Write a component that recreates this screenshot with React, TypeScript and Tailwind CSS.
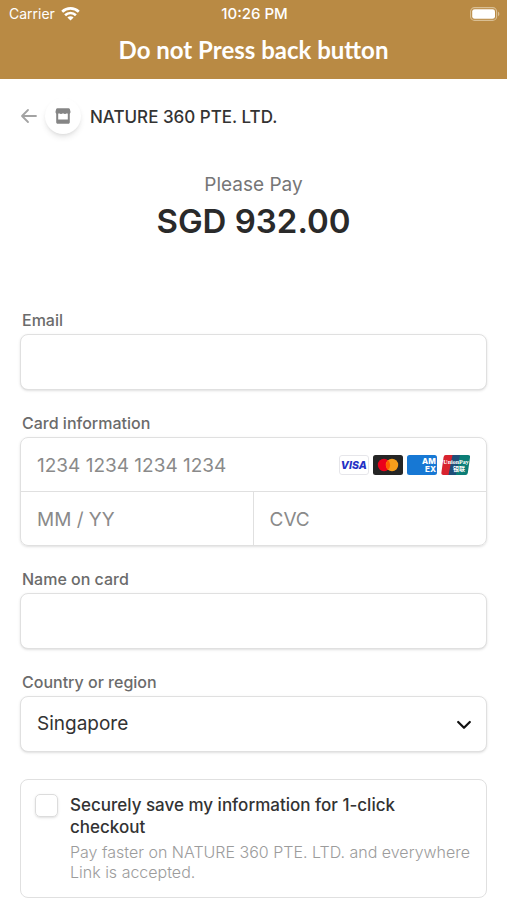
import React, { useState } from "react";
import clsx from "clsx";

const fieldClass =
  "w-full h-14 rounded-lg border border-[#e0e0e0] bg-white px-4 text-[19px] text-[#333] shadow-sm outline-none";
const cardInputClass =
  "min-w-0 pt-0.5 text-[19px] leading-6 outline-none placeholder:text-[#8a8a8a]";
const labelClass = "block mb-1 pl-0.5 text-base leading-5 font-medium text-[#6b6b6b]";

function StatusBar() {
  return (
    <div className="grid grid-cols-3 items-center h-7 pl-[9px] pr-[7px] text-sm">
      <div className="flex items-center gap-[6px]">
        <span>Carrier</span>
        <svg width="19" height="14" viewBox="0 0 19 14" fill="none">
          <path d="M1.2 4.8a12 12 0 0 1 16.6 0" stroke="#fff" strokeWidth="2.7" />
          <path d="M4.1 8.2a7.8 7.8 0 0 1 10.8 0" stroke="#fff" strokeWidth="2.6" />
          <path d="M9.5 13.6 6.4 10.6a4.4 4.4 0 0 1 6.2 0Z" fill="#fff" />
        </svg>
      </div>
      <span className="text-center text-[15px] font-medium">10:26 PM</span>
      <svg className="ml-auto" width="30" height="14" viewBox="0 0 30 14" fill="none">
        <rect x="0.6" y="0.6" width="26" height="12.8" rx="4" stroke="#d9bf94" strokeWidth="1.1" />
        <rect x="2.2" y="2.2" width="22.8" height="9.6" rx="2.4" fill="#fff" />
        <path d="M28 4.8c1.8.6 1.8 3.8 0 4.4Z" fill="#d9bf94" />
      </svg>
    </div>
  );
}

function CardBrands() {
  return (
    <div className="flex items-center gap-1 shrink-0">
      <svg width="30" height="20" viewBox="0 0 30 20" role="img" aria-label="Visa">
        <rect x="0.5" y="0.5" width="29" height="19" rx="2.5" fill="#fff" stroke="#e6e6ea" />
        <text
          x="14.8"
          y="13.8"
          textAnchor="middle"
          fontFamily="Inter, sans-serif"
          fontSize="10.5"
          fontWeight="800"
          fontStyle="italic"
          fill="#2430c4"
        >
          VISA
        </text>
      </svg>
      <svg width="30" height="20" viewBox="0 0 30 20" role="img" aria-label="Mastercard">
        <rect width="30" height="20" rx="2.5" fill="#252525" />
        <circle cx="11" cy="10" r="6.2" fill="#eb001b" />
        <circle cx="19" cy="10" r="6.2" fill="#f79e1b" />
        <path d="M15 5.3a6.2 6.2 0 0 1 0 9.4 6.2 6.2 0 0 1 0-9.4Z" fill="#ff5f00" />
      </svg>
      <svg width="30" height="20" viewBox="0 0 30 20" role="img" aria-label="American Express">
        <rect width="30" height="20" rx="2.5" fill="#1778d4" />
        <g fontFamily="Inter, sans-serif" fontSize="8" fontWeight="800" fill="#fff">
          <text x="15" y="9">AM</text>
          <text x="18" y="17">EX</text>
        </g>
      </svg>
      <svg width="30" height="20" viewBox="0 0 30 20" role="img" aria-label="UnionPay">
        <path d="M4.6 0H14L10 20H2.4Q0 20 .4 17.6L2.6 2Q3 0 4.6 0Z" fill="#d8232f" />
        <path d="M11.5 0H20.5L16.5 20H7.5Z" fill="#1f4e79" />
        <path d="M19 0H27Q29.4 0 29 2.4L26.8 18Q26.4 20 24.6 20H14.8Z" fill="#0b7d76" />
        <g fill="#fff" fontWeight="700" textAnchor="middle">
          <text x="15" y="9" fontFamily="Liberation Serif, serif" fontSize="6">
            UnionPay
          </text>
          <text x="18" y="16.4" fontFamily="Noto Sans CJK SC, sans-serif" fontSize="6">
            银联
          </text>
        </g>
      </svg>
    </div>
  );
}

export default function App() {
  const [saveInfo, setSaveInfo] = useState(false);

  return (
    <div className="min-h-screen bg-white font-['Inter',sans-serif]">
      <header className="h-[79px] bg-[#b98a44] text-white">
        <StatusBar />
        <h1 className="mt-2 text-center text-2xl leading-7 font-bold font-['Lato',sans-serif]">
          Do not Press back button
        </h1>
      </header>

      <main className="px-5 pb-1">
        <div className="flex items-center pt-[19px]">
          <button aria-label="Back">
            <svg width="17" height="16" viewBox="0 0 17 16" fill="none">
              <path
                d="M16 8H2.5M8 2 2 8l6 6"
                stroke="#a3a3a3"
                strokeWidth="1.8"
                strokeLinecap="round"
                strokeLinejoin="round"
              />
            </svg>
          </button>
          <div className="ml-2 w-9 h-9 flex items-center justify-center rounded-full bg-white shadow-md">
            <svg width="16" height="16" viewBox="0 0 16 16" fill="#858585">
              <path d="M2.4.3h11.2c.6 0 1 .3 1.2.8l.7 2.7c0 1.3-.7 2.2-1.6 2.2-.8 0-1.4-.3-1.9-.8-.5.5-1.2.8-2 .8s-1.5-.3-2-.8c-.5.5-1.2.8-2 .8s-1.5-.3-2-.8c-.5.5-1.1.8-1.9.8C1.2 6 .5 5.1.5 3.8l.7-2.7c.2-.5.6-.8 1.2-.8Z" />
              <path d="M1.2 5h2v6.4h9.6V5h2v9.2c0 .9-.6 1.5-1.5 1.5H2.7c-.9 0-1.5-.6-1.5-1.5Z" />
            </svg>
          </div>
          <span className="ml-[9px] pt-0.5 text-[17px] leading-6 font-medium text-[#333]">
            NATURE 360 PTE. LTD.
          </span>
        </div>

        <div className="mt-[39px] text-center">
          <p className="text-[19px] leading-6 text-[#767676]">Please Pay</p>
          <p className="text-[33px] leading-[48px] font-semibold text-[#2a2a2a]">
            SGD 932.00
          </p>
        </div>

        <form className="mt-[65px]">
          <div>
            <label htmlFor="email" className={labelClass}>
              Email
            </label>
            <input id="email" type="email" className={fieldClass} />
          </div>

          <fieldset className="mt-[23px]">
            <legend className={labelClass}>Card information</legend>
            <div className="rounded-lg border border-[#e0e0e0] shadow-sm">
              <div className="flex items-center h-[54px] pl-4 pr-[15px] border-b border-[#e0e0e0]">
                <input
                  aria-label="Card number"
                  placeholder="1234 1234 1234 1234"
                  className={clsx(cardInputClass, "flex-1")}
                />
                <CardBrands />
              </div>
              <div className="grid grid-cols-2 h-[53px]">
                <input
                  aria-label="Expiry date"
                  placeholder="MM / YY"
                  className={clsx(cardInputClass, "px-4 border-r border-[#e0e0e0]")}
                />
                <input
                  aria-label="CVC"
                  placeholder="CVC"
                  className={clsx(cardInputClass, "px-4")}
                />
              </div>
            </div>
          </fieldset>

          <div className="mt-[23px]">
            <label htmlFor="name" className={labelClass}>
              Name on card
            </label>
            <input id="name" type="text" className={fieldClass} />
          </div>

          <div className="mt-[23px]">
            <label htmlFor="country" className={labelClass}>
              Country or region
            </label>
            <div className="relative">
              <select id="country" className={clsx(fieldClass, "block appearance-none")}>
                <option>Singapore</option>
              </select>
              <svg
                className="absolute right-4 top-6 pointer-events-none"
                width="14"
                height="10"
                viewBox="0 0 14 10"
                fill="none"
              >
                <path
                  d="M1.2 2 7 7.8 12.8 2"
                  stroke="#111"
                  strokeWidth="2.2"
                  strokeLinecap="round"
                  strokeLinejoin="round"
                />
              </svg>
            </div>
          </div>

          <div className="mt-[27px] flex gap-3 rounded-lg border border-[#e0e0e0] pl-[14px] pr-1 pt-[14px] pb-[15px]">
            <input
              id="save"
              type="checkbox"
              checked={saveInfo}
              onChange={() => setSaveInfo(!saveInfo)}
              className="shrink-0 w-[23px] h-[23px] appearance-none rounded-[5px] border border-[#dcdcdc] shadow-sm checked:bg-[#333]"
            />
            <div>
              <label
                htmlFor="save"
                className="block pr-8 text-[17px] leading-[22px] font-medium text-[#333]"
              >
                Securely save my information for 1-click checkout
              </label>
              <p className="mt-1 text-base leading-5 font-light text-[#9c9c9c]">
                Pay faster on NATURE 360 PTE. LTD. and everywhere Link is accepted.
              </p>
            </div>
          </div>
        </form>
      </main>
    </div>
  );
}
